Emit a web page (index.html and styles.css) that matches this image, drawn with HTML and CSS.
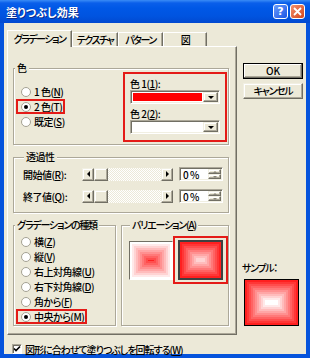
FILE: index.html
```html
<!DOCTYPE html>
<html lang="ja">
<head>
  <meta charset="UTF-8">
  <title>塗りつぶし効果</title>
  <link rel="stylesheet" href="styles.css">
</head>
<body>

  <div class="window">
    <!-- タイトルバー -->
    <div class="titlebar">
      <span class="title">塗りつぶし効果</span>
      <span class="cap-btn help">?</span>
      <span class="cap-btn close">
        <svg width="9" height="9" viewBox="0 0 9 9"><path d="M1 1L8 8M8 1L1 8" stroke="#fff" stroke-width="1.8"/></svg>
      </span>
    </div>

    <div class="client">
      <div class="main">
        <!-- タブ -->
        <div class="tabs">
          <div class="tab active tab-grad">グラデーション</div>
          <div class="tab tab-tex">テクスチャ</div>
          <div class="tab tab-pat">パターン</div>
          <div class="tab tab-pic">図</div>
        </div>

        <div class="page">
          <!-- 色 -->
          <fieldset class="group">
            <legend>色</legend>
            <div class="color-body">
              <div class="opts">
                <div class="opt"><span class="radio"></span>1 色(<u>N</u>)</div>
                <div class="opt mark"><span class="radio on"></span>2 色(<u>T</u>)</div>
                <div class="opt"><span class="radio"></span>既定(<u>S</u>)</div>
              </div>
              <div class="colors">
                <div class="clabel">色 1(<u>1</u>):</div>
                <div class="combo"><span class="swatch red"></span><span class="drop"></span></div>
                <div class="clabel">色 2(<u>2</u>):</div>
                <div class="combo"><span class="swatch"></span><span class="drop"></span></div>
              </div>
            </div>
          </fieldset>

          <!-- 透過性 -->
          <fieldset class="group transp">
            <legend>透過性</legend>
            <div class="slider-row">
              <span class="slabel">開始値(<u>R</u>):</span>
              <div class="scroll">
                <span class="sbtn"><i class="arr-l"></i></span>
                <span class="sbtn thumb"></span>
                <span class="track"></span>
                <span class="sbtn"><i class="arr-r"></i></span>
              </div>
              <div class="spin">
                <span class="spin-val">0 %</span>
                <span class="spin-btns"><span class="sbtn"><i class="arr-u"></i></span><span class="sbtn"><i class="arr-d"></i></span></span>
              </div>
            </div>
            <div class="slider-row">
              <span class="slabel">終了値(<u>Q</u>):</span>
              <div class="scroll">
                <span class="sbtn"><i class="arr-l"></i></span>
                <span class="sbtn thumb"></span>
                <span class="track"></span>
                <span class="sbtn"><i class="arr-r"></i></span>
              </div>
              <div class="spin">
                <span class="spin-val">0 %</span>
                <span class="spin-btns"><span class="sbtn"><i class="arr-u"></i></span><span class="sbtn"><i class="arr-d"></i></span></span>
              </div>
            </div>
          </fieldset>

          <div class="group-row">
            <!-- グラデーションの種類 -->
            <fieldset class="group kind">
              <legend>グラデーションの種類</legend>
              <div class="kind-list">
                <div class="opt"><span class="radio"></span>横(<u>Z</u>)</div>
                <div class="opt"><span class="radio"></span>縦(<u>V</u>)</div>
                <div class="opt"><span class="radio"></span>右上対角線(<u>U</u>)</div>
                <div class="opt"><span class="radio"></span>右下対角線(<u>D</u>)</div>
                <div class="opt"><span class="radio"></span>角から(<u>F</u>)</div>
                <div class="opt mark"><span class="radio on"></span>中央から(<u>M</u>)</div>
              </div>
            </fieldset>

            <!-- バリエーション -->
            <fieldset class="group variation">
              <legend>バリエーション(<u>A</u>)</legend>
              <div class="var-body">
                <div class="var-prev grad-in"></div>
                <div class="var-pick"><div class="var-prev sel grad-out"></div></div>
              </div>
            </fieldset>
          </div>
        </div>

        <div class="rotate">
          <span class="checkbox">
            <svg width="8" height="8" viewBox="0 0 8 8"><path d="M1 3.5L3 5.5L7 1.5" stroke="#000" stroke-width="1.6" fill="none"/></svg>
          </span>
          図形に合わせて塗りつぶしを回転する(<u>W</u>)
        </div>
      </div>

      <!-- 右側 -->
      <div class="side">
        <button class="btn default">OK</button>
        <button class="btn kana">キャンセル</button>
        <div class="sample-label kana">サンプル：</div>
        <div class="sample grad-out"></div>
      </div>
    </div>
  </div>

</body>
</html>
```

FILE: styles.css
```css
/* ウィンドウ全体 */
body {
  margin: 0;
  background: #fff;
  font-family: "Noto Sans CJK JP", sans-serif;
  font-size: 10px;
  font-weight: 500;
  font-feature-settings: "palt";
  letter-spacing: -0.5px;
  color: #000;
}
u {
  text-decoration: underline;
}
.kana {
  letter-spacing: -1.3px;
}

.window {
  width: 310px;
  height: 358px;
  display: flex;
  flex-direction: column;
  background: #0553dc;
}

/* タイトルバー */
.titlebar {
  height: 23px;
  flex: none;
  display: flex;
  align-items: center;
  padding: 0 5px 0 6px;
  background: linear-gradient(#3a8cf6 0, #0a5fea 3px, #0058e6 8px, #0054e0 16px, #0149d0 100%);
}
.title {
  flex: 1;
  color: #fff;
  font-weight: bold;
  font-size: 11px;
  letter-spacing: 0;
  text-shadow: 1px 1px 0 #0a2a8c;
}
.cap-btn {
  width: 15px;
  height: 15px;
  box-sizing: border-box;
  border: 1px solid #fff;
  border-radius: 3px;
  margin-left: 2px;
  display: flex;
  align-items: center;
  justify-content: center;
}
.help {
  background: linear-gradient(135deg, #6a9cfb, #1a55e5);
  color: #fff;
  font-family: "DejaVu Sans", sans-serif;
  font-weight: bold;
  font-size: 11px;
  letter-spacing: 0;
}
.close {
  background: linear-gradient(135deg, #f2906e, #d4461c);
}

/* 本体 */
.client {
  flex: 1;
  margin: 0 4px 4px;
  background: #ece9d8;
  display: flex;
}
.main {
  width: 233px;
  flex: none;
  padding: 7px 0 0 3px;
  box-sizing: border-box;
  display: flex;
  flex-direction: column;
}

/* タブ */
.tabs {
  display: flex;
  align-items: flex-end;
  height: 16px;
  position: relative;
  z-index: 1;
}
.tab {
  height: 14px;
  box-sizing: border-box;
  border: 1px solid;
  border-color: #fff #716f64 transparent #fff;
  border-bottom: none;
  box-shadow: inset -1px 0 0 #aca899;
  background: #ece9d8;
  text-align: center;
  line-height: 13px;
  letter-spacing: -1.5px;
  white-space: nowrap;
}
.tab.active {
  height: 17px;
  margin-bottom: -1px;
  line-height: 15px;
}
.tab-grad { width: 65px; }
.tab-tex { width: 46px; }
.tab-pat { width: 45px; }
.tab-pic { width: 44px; }

.page {
  height: 289px;
  box-sizing: border-box;
  border: 1px solid;
  border-color: #fff #716f64 #716f64 #fff;
  box-shadow: inset -1px -1px 0 #aca899;
  padding: 16px 7px 0 5px;
}

/* グループ枠 */
.group {
  margin: 0;
  padding: 0;
  min-width: 0;
  border: 1px solid #aca899;
  box-shadow: inset 1px 1px 0 #fff, 1px 1px 0 #fff;
}
.group legend {
  padding: 0 2px;
  margin-left: 1px;
  line-height: 10px;
  background: #ece9d8;
  white-space: nowrap;
}
.kind legend,
.variation legend {
  letter-spacing: -1.2px;
}

/* ラジオ */
.opt {
  display: flex;
  align-items: center;
  height: 15px;
  width: max-content;
  margin-left: 2px;
  padding: 0 3px 0 5px;
  white-space: nowrap;
}
.opt.mark {
  outline: 2px solid #e41b17;
  outline-offset: -2px;
}
.radio {
  width: 10px;
  height: 10px;
  box-sizing: border-box;
  border-radius: 50%;
  border: 1px solid #a5a293;
  background: #fff;
  margin-right: 3px;
  display: flex;
  align-items: center;
  justify-content: center;
}
.radio.on::after {
  content: "";
  width: 4px;
  height: 4px;
  border-radius: 50%;
  background: #000;
}

/* 色 */
.color-body {
  display: flex;
  margin: -1px 1px 2px 0;
}
.opts {
  flex: 1;
  padding-top: 12px;
}
.colors {
  width: 104px;
  box-sizing: border-box;
  border: 2px solid #e41b17;
  padding: 3px 5px 6px;
}
.clabel {
  line-height: 13px;
}
.clabel + .combo + .clabel {
  margin-top: 3px;
}
.combo {
  height: 14px;
  box-sizing: border-box;
  border: 1px solid;
  border-color: #aca899 #fff #fff #aca899;
  box-shadow: inset 1px 1px 0 #716f64, inset -1px -1px 0 #f1efe2;
  background: #fff;
  display: flex;
  padding: 1px;
}
.swatch {
  flex: 1;
  margin: 1px;
  background: #fff;
}
.swatch.red {
  background: #ff0000;
}
.drop,
.sbtn,
.btn {
  box-sizing: border-box;
  background: #ece9d8;
  border: 1px solid;
  border-color: #f1efe2 #716f64 #716f64 #f1efe2;
  box-shadow: inset -1px -1px 0 #aca899, inset 1px 1px 0 #fff;
}
.drop {
  width: 15px;
  display: flex;
  align-items: center;
  justify-content: center;
}
.drop::after {
  content: "";
  border-top: 3px solid #000;
  border-left: 3px solid transparent;
  border-right: 3px solid transparent;
}

/* 透過性 */
.transp {
  margin-top: 7px;
  padding: 5px 0 9px 9px;
}
.slider-row {
  display: flex;
  align-items: center;
  height: 14px;
}
.slider-row + .slider-row {
  margin-top: 8px;
}
.slabel {
  width: 59px;
}
.scroll {
  display: flex;
  width: 91px;
  height: 13px;
}
.sbtn {
  width: 12px;
  display: flex;
  align-items: center;
  justify-content: center;
}
.sbtn.thumb {
  width: 14px;
}
.track {
  flex: 1;
  background: repeating-conic-gradient(#fff 0 25%, #ece9d8 0 50%) 0 0 / 2px 2px;
}
.arr-l,
.arr-r {
  border-top: 3px solid transparent;
  border-bottom: 3px solid transparent;
}
.arr-l {
  border-right: 3px solid #000;
}
.arr-r {
  border-left: 3px solid #000;
}
.spin {
  width: 44px;
  height: 14px;
  margin-left: 6px;
  box-sizing: border-box;
  border: 1px solid;
  border-color: #aca899 #fff #fff #aca899;
  box-shadow: inset 1px 1px 0 #716f64, inset -1px -1px 0 #f1efe2;
  background: #fff;
  display: flex;
  padding: 1px;
}
.spin-val {
  flex: 1;
  line-height: 11px;
  padding-left: 2px;
}
.spin-btns {
  width: 13px;
  display: flex;
  flex-direction: column;
}
.spin-btns .sbtn {
  width: 13px;
  flex: 1;
}
.arr-u,
.arr-d {
  border-left: 2px solid transparent;
  border-right: 2px solid transparent;
}
.arr-u {
  border-bottom: 2px solid #8a877a;
}
.arr-d {
  border-top: 2px solid #8a877a;
}

/* 種類・バリエーション */
.group-row {
  display: flex;
  gap: 5px;
  margin-top: 7px;
}
.kind {
  width: 103px;
  box-sizing: border-box;
  padding: 4px 0 1px;
}
.variation {
  flex: 1;
  padding: 6px 0 0 7px;
}
.var-body {
  display: flex;
  align-items: center;
}
.var-prev {
  width: 44px;
  height: 39px;
  box-sizing: border-box;
  border: 1px solid;
  border-color: #716f64 #fff #fff #716f64;
}
.var-pick {
  border: 2px solid #e41b17;
  padding: 2px 3px;
}
.var-prev.sel {
  width: 45px;
  height: 40px;
  border: 2px solid #404040;
}

/* グラデーション */
.grad-out {
  background: #fff;
  box-shadow: inset 0 0 0 2px #ff2020, inset 0 0 0 4px #ff3636, inset 0 0 0 6px #ff4d4d,
    inset 0 0 0 8px #ff6363, inset 0 0 0 10px #ff7979, inset 0 0 0 12px #ff9090,
    inset 0 0 0 14px #ffa6a6, inset 0 0 0 16px #ffbcbc, inset 0 0 0 18px #ffd3d3,
    inset 0 0 0 20px #ffe9e9;
}
.grad-in {
  background: #ff2020;
  box-shadow: inset 0 0 0 2px #fff, inset 0 0 0 4px #ffe9e9, inset 0 0 0 6px #ffd3d3,
    inset 0 0 0 8px #ffbcbc, inset 0 0 0 10px #ffa6a6, inset 0 0 0 12px #ff9090,
    inset 0 0 0 14px #ff7979, inset 0 0 0 16px #ff6363, inset 0 0 0 18px #ff4d4d;
}

/* チェックボックス */
.rotate {
  display: flex;
  align-items: center;
  height: 10px;
  margin: 9px 0 0 5px;
  white-space: nowrap;
  letter-spacing: -1px;
}
.checkbox {
  width: 10px;
  height: 10px;
  box-sizing: border-box;
  border: 1px solid;
  border-color: #aca899 #fff #fff #aca899;
  box-shadow: inset 1px 1px 0 #716f64;
  background: #fff;
  margin-right: 3px;
  display: flex;
  align-items: center;
  justify-content: center;
}

/* 右側のボタン */
.side {
  flex: 1;
  padding: 40px 0 0 6px;
  display: flex;
  flex-direction: column;
}
.btn {
  width: 60px;
  height: 16px;
  padding: 0;
  font: inherit;
  line-height: 12px;
  color: #000;
}
.btn + .btn {
  margin-top: 4px;
}
.btn.default {
  border: 1px solid #000;
  box-shadow: inset -1px -1px 0 #716f64, inset 1px 1px 0 #fff, inset -2px -2px 0 #aca899;
}
.sample-label {
  margin: 163px 0 0 -1px;
  line-height: 12px;
}
.sample {
  width: 55px;
  height: 47px;
  margin: 5px 0 0 1px;
  box-sizing: border-box;
  border: 1px solid #000;
}
```
